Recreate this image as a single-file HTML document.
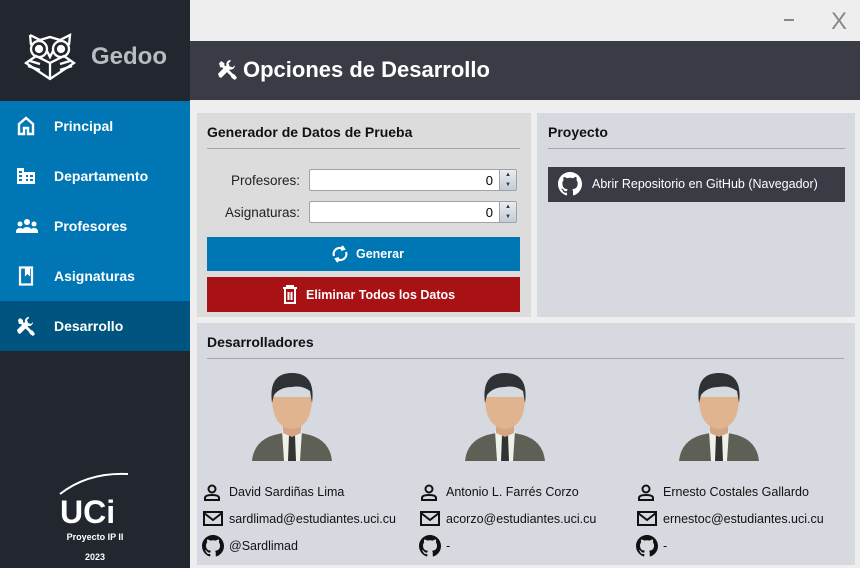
<!DOCTYPE html>
<html><head><meta charset="utf-8"><style>
*{margin:0;padding:0;box-sizing:border-box}
body{width:860px;height:568px;overflow:hidden;background:#eeeeee;font-family:"Liberation Sans",sans-serif;position:relative}
.abs{position:absolute}
#side{left:0;top:0;width:190px;height:568px;background:#22272f}
.nav{position:absolute;left:0;width:190px;height:50px;background:#0077b4;color:#fff;font-weight:bold;font-size:14px}
.nav span{position:absolute;left:54px;top:17px}
.nav svg{position:absolute;left:16px;top:15px}
.panel{position:absolute}
.ttl{position:absolute;left:10px;top:11px;font-weight:bold;font-size:14px;color:#111}
.hr{position:absolute;left:10px;height:1px;background:#a3a6ad}
.lbl{position:absolute;font-size:13.5px;color:#222;text-align:right;width:100px}
.inp{position:absolute;width:208px;height:22px;background:#fff;border:1px solid #9ea3aa;border-radius:2px;font-size:13px;text-align:right;padding:3px 23px 0 0}
.spin{position:absolute;right:0;top:0;width:17px;height:20px;background:linear-gradient(#e9ecf1,#c5ccd6);border-left:1px solid #9ea3aa;font-size:6px;line-height:10px;text-align:center;color:#333}
.btn{position:absolute;color:#fff;font-weight:bold;font-size:12.5px}
.dev{position:absolute;font-size:12.5px;color:#111}
</style></head><body>
<svg width="0" height="0" style="position:absolute"><defs>
<g id="av"><path d="M0 88 Q2 68 22 62 L40 58 L58 62 Q78 68 80 88Z" fill="#5f6055"/><path d="M30 58h20l-2 30h-16z" fill="#eef0ea"/><path d="M37 62h6l1 26h-8z" fill="#333"/><path d="M31 40h18v20l-9 4-9-4z" fill="#d4a582"/><path d="M20 24 Q20 54 40 56 Q60 54 60 24z" fill="#e0b48f"/><path d="M20 30 Q16 0 40 0 Q64 0 60 30 L58 18 Q50 12 40 14 Q28 14 22 22z" fill="#2f3234"/></g>
<g id="pi"><circle cx="9" cy="5" r="3.5" fill="none" stroke="#111" stroke-width="2"/><path d="M2 16v-2q0-3 7-3t7 3v2z" fill="none" stroke="#111" stroke-width="2"/></g>
<g id="mi"><rect x="1" y="2" width="18" height="13" fill="none" stroke="#111" stroke-width="2"/><path d="M1 3l9 7 9-7" fill="none" stroke="#111" stroke-width="2"/></g>
<path id="gh" d="M8 0C3.58 0 0 3.58 0 8c0 3.54 2.29 6.53 5.47 7.59.4.07.55-.17.55-.38 0-.19-.01-.82-.01-1.49-2.01.37-2.530-.49-2.69-.94-.09-.23-.48-.94-.82-1.13-.28-.15-.68-.52-.01-.53.63-.01 1.08.58 1.23.82.72 1.21 1.87.87 2.33.66.07-.52.28-.87.51-1.07-1.78-.2-3.64-.89-3.64-3.95 0-.87.31-1.59.82-2.150-.08-.2-.36-1.02.08-2.12 0 0 .67-.21 2.2.82.64-.18 1.32-.27 2-.27.68 0 1.36.09 2 .27 1.53-1.04 2.2-.82 2.2-.82.44 1.1.16 1.92.08 2.12.51.56.82 1.27.82 2.15 0 3.07-1.87 3.75-3.650 3.95.29.25.54.73.54 1.48 0 1.07-.01 1.93-.01 2.2 0 .21.15.46.55.38A8.013 8.013 0 0016 8c0-4.42-3.58-8-8-8z"/>
<g id="tools" fill="#fff"><path d="M2 4l2-2 3 2 0 2 8 8 2 1 2 3-2 2-3-2-1-2-8-8h-2z"/><path d="M13 1a4 4 0 0 0-4 5L1 14l1 3 2 1 8-8a4 4 0 0 0 5-4l-2 2-3-1-1-3 2-2z"/></g>
</defs></svg>
<div id="side" class="abs">
<svg class="abs" style="left:24px;top:31px" width="52" height="50" viewBox="0 0 52 50" fill="none" stroke="#fff" stroke-width="2.3">
<path d="M6 4 L16 9 L26 6 L36 9 L46 4 L45 14"/><path d="M6 4 L7 14"/>
<circle cx="15" cy="18" r="8"/><circle cx="37" cy="18" r="8"/>
<circle cx="15" cy="18" r="3" fill="#fff"/><circle cx="37" cy="18" r="3" fill="#fff"/>
<path d="M23 20 L26 26 L29 20"/>
<path d="M2 32 L26 48 L50 32 L40 25 L26 32 L12 25 Z"/><path d="M26 32 V48"/>
<path d="M6 30 L16 33 M4 35 L16 39 M36 33 L46 30 M36 39 L48 35"/>
</svg>
<div class="abs" style="left:91px;top:43px;color:#b8bcc2;font-weight:bold;font-size:24px">Gedoo</div>
<div class="nav" style="top:101px"><svg width="20" height="20" viewBox="0 0 20 20" fill="none" stroke="#fff" stroke-width="2.4"><path d="M3 18V8L10 2L17 8V18H12V12H8V18Z"/></svg><span>Principal</span></div>
<div class="nav" style="top:151px"><svg width="20" height="20" viewBox="0 0 20 20" fill="#fff"><path d="M1 2h7v16H1z M8 6h11v12H8z"/><path fill="#0077b4" d="M3 5h3v2H3zM3 9h3v2H3zM3 13h3v2H3zM10 9h2v2h-2zM14 9h3v2h-3zM10 13h2v2h-2zM14 13h3v2h-3z"/></svg><span>Departamento</span></div>
<div class="nav" style="top:201px"><svg width="22" height="20" viewBox="0 0 22 20" fill="#fff"><circle cx="4" cy="8" r="2.5"/><circle cx="11" cy="6" r="3"/><circle cx="18" cy="8" r="2.5"/><path d="M0 16q0-4 4-4q3 0 3 2v3H0zM6 17q0-6 5-6t5 6zM15 14q0-2 3-2q4 0 4 4v1h-7z"/></svg><span>Profesores</span></div>
<div class="nav" style="top:251px"><svg width="20" height="20" viewBox="0 0 20 20" fill="none" stroke="#fff" stroke-width="2.2"><path d="M4 1.5h12v17H4z"/><path d="M10 2v6l1.5-1.5L13 8V2" fill="#fff"/></svg><span>Asignaturas</span></div>
<div class="nav" style="top:301px;background:#005580"><svg width="20" height="20" viewBox="0 0 20 20"><use href="#tools"/></svg><span>Desarrollo</span></div>
<svg class="abs" style="left:58px;top:470px" width="72" height="56" viewBox="0 0 72 56"><path d="M2 24 Q30 2 70 4" stroke="#fff" stroke-width="2" fill="none"/><text x="2" y="53" font-family="Liberation Sans" font-weight="bold" font-size="32" fill="#fff">UCi</text></svg>
<div class="abs" style="left:0;width:190px;top:532px;text-align:center;color:#fff;font-size:9px;font-weight:bold">Proyecto IP II</div>
<div class="abs" style="left:0;width:190px;top:552px;text-align:center;color:#fff;font-size:9px;font-weight:bold">2023</div>
</div>
<div class="abs" style="left:784px;top:19px;width:10px;height:1.5px;background:#888"></div>
<div class="abs" style="left:831px;top:8px;font-size:24px;color:#888">X</div>
<div class="abs" style="left:190px;top:41px;width:670px;height:59px;background:#393c45"></div>
<svg class="abs" style="left:217px;top:59px" width="21" height="21" viewBox="0 0 20 20"><use href="#tools"/></svg>
<div class="abs" style="left:243px;top:57px;color:#fff;font-weight:bold;font-size:22px">Opciones de Desarrollo</div>

<div class="panel" style="left:197px;top:113px;width:334px;height:204px;background:#dcdcdc">
<div class="ttl">Generador de Datos de Prueba</div><div class="hr" style="top:35px;width:313px"></div>
<div class="lbl" style="left:3px;top:60px">Profesores:</div>
<div class="inp" style="left:112px;top:56px">0<div class="spin">▲<br>▼</div></div>
<div class="lbl" style="left:3px;top:92px">Asignaturas:</div>
<div class="inp" style="left:112px;top:88px">0<div class="spin">▲<br>▼</div></div>
<div class="btn" style="left:10px;top:124px;width:313px;height:34px;background:#0077b5"><svg class="abs" style="left:124px;top:7px" width="18" height="20" viewBox="0 0 18 20" fill="none" stroke="#fff" stroke-width="2.2"><path d="M3 12a6 6 0 0 1 9-7M15 8a6 6 0 0 1-9 7"/><path d="M11 2l2 3-3 1M7 18l-2-3 3-1"/></svg><span class="abs" style="left:149px;top:10px">Generar</span></div>
<div class="btn" style="left:10px;top:164px;width:313px;height:35px;background:#a81214"><svg class="abs" style="left:75px;top:8px" width="16" height="19" viewBox="0 0 16 19" fill="none" stroke="#fff" stroke-width="2"><path d="M1 3h14M5 3V1h6v2M3 4v14h10V4M6.5 7v8M9.5 7v8"/></svg><span class="abs" style="left:99px;top:11px">Eliminar Todos los Datos</span></div>
</div>

<div class="panel" style="left:537px;top:113px;width:318px;height:204px;background:#d6d9e0">
<div class="ttl" style="left:11px">Proyecto</div><div class="hr" style="left:11px;top:35px;width:297px"></div>
<div class="btn" style="left:11px;top:54px;width:297px;height:35px;background:#393c45"><svg class="abs" style="left:10px;top:5px" width="24" height="24" viewBox="0 0 16 16" fill="#fff"><use href="#gh"/></svg><span class="abs" style="left:44px;top:10px;font-weight:normal;font-size:12.5px">Abrir Repositorio en GitHub (Navegador)</span></div>
</div>

<div class="panel" style="left:197px;top:323px;width:658px;height:242px;background:#d6d9e0">
<div class="ttl">Desarrolladores</div><div class="hr" style="top:35px;width:637px"></div>
</div>

<svg class="abs" style="left:252px;top:373px" width="80" height="88"><use href="#av"/></svg>
<svg class="abs" style="left:465px;top:373px" width="80" height="88"><use href="#av"/></svg>
<svg class="abs" style="left:679px;top:373px" width="80" height="88"><use href="#av"/></svg>

<svg class="abs" style="left:203px;top:484px" width="20" height="18"><use href="#pi"/></svg>
<div class="dev" style="left:229px;top:485px">David Sardiñas Lima</div>
<svg class="abs" style="left:203px;top:510px" width="20" height="17"><use href="#mi"/></svg>
<div class="dev" style="left:229px;top:512px">sardlimad@estudiantes.uci.cu</div>
<svg class="abs" style="left:202px;top:535px" width="22" height="22" viewBox="0 0 16 16" fill="#111"><use href="#gh"/></svg>
<div class="dev" style="left:229px;top:539px">@Sardlimad</div>

<svg class="abs" style="left:420px;top:484px" width="20" height="18"><use href="#pi"/></svg>
<div class="dev" style="left:446px;top:485px">Antonio L. Farrés Corzo</div>
<svg class="abs" style="left:420px;top:510px" width="20" height="17"><use href="#mi"/></svg>
<div class="dev" style="left:446px;top:512px">acorzo@estudiantes.uci.cu</div>
<svg class="abs" style="left:419px;top:535px" width="22" height="22" viewBox="0 0 16 16" fill="#111"><use href="#gh"/></svg>
<div class="dev" style="left:446px;top:539px">-</div>

<svg class="abs" style="left:637px;top:484px" width="20" height="18"><use href="#pi"/></svg>
<div class="dev" style="left:663px;top:485px">Ernesto Costales Gallardo</div>
<svg class="abs" style="left:637px;top:510px" width="20" height="17"><use href="#mi"/></svg>
<div class="dev" style="left:663px;top:512px">ernestoc@estudiantes.uci.cu</div>
<svg class="abs" style="left:636px;top:535px" width="22" height="22" viewBox="0 0 16 16" fill="#111"><use href="#gh"/></svg>
<div class="dev" style="left:663px;top:539px">-</div>
</body></html>
